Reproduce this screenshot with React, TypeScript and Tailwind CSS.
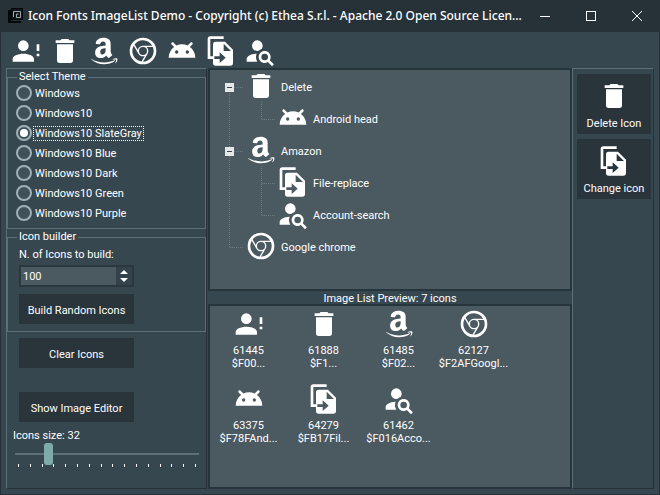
import { useState, type ReactNode } from "react";

type IconName = "accountAlert" | "trash" | "amazon" | "chrome" | "android" | "fileReplace" | "accountSearch";

const PATHS: Record<IconName, string> = {
  accountAlert:
    "M10,4A4,4 0 0,1 14,8A4,4 0 0,1 10,12A4,4 0 0,1 6,8A4,4 0 0,1 10,4M10,14C14.42,14 18,15.79 18,18V20H2V18C2,15.79 5.58,14 10,14M20,12V7H22V12H20M20,16V14H22V16H20Z",
  trash:
    "M19,4H15.5L14.5,3H9.5L8.5,4H5V6H19M6,19A2,2 0 0,0 8,21H16A2,2 0 0,0 18,19V7H6V19Z",
  amazon:
    "M15.93,17.09C15.75,17.25 15.5,17.26 15.3,17.15C14.41,16.41 14.25,16.07 13.76,15.36C12.29,16.86 11.25,17.31 9.34,17.31C7.09,17.31 5.33,15.92 5.33,13.14C5.33,10.96 6.5,9.5 8.19,8.76C9.65,8.12 11.68,8 13.23,7.83V7.5C13.23,6.84 13.28,6.09 12.9,5.54C12.58,5.05 11.95,4.84 11.4,4.84C10.38,4.84 9.47,5.37 9.25,6.45C9.2,6.69 9,6.93 8.78,6.94L6.18,6.66C5.96,6.61 5.72,6.44 5.78,6.1C6.38,2.95 9.23,2 11.78,2C13.08,2 14.78,2.35 15.81,3.33C17.11,4.55 17,6.18 17,7.95V12.12C17,13.37 17.5,13.93 18,14.6C18.17,14.85 18.21,15.14 18,15.31L15.94,17.09H15.93M13.23,10.56V10C11.29,10 9.24,10.39 9.24,12.67C9.24,13.83 9.85,14.62 10.87,14.62C11.63,14.62 12.3,14.15 12.73,13.4C13.25,12.47 13.23,11.6 13.23,10.56M20.16,19.54C18,21.14 14.82,22 12.1,22C8.29,22 4.85,20.59 2.25,18.24C2.05,18.06 2.23,17.81 2.47,17.95C5.28,19.58 8.75,20.56 12.33,20.56C14.74,20.56 17.4,20.06 19.84,19.03C20.21,18.87 20.5,19.27 20.16,19.54M21.07,18.5C20.79,18.14 19.22,18.33 18.5,18.42C18.31,18.44 18.28,18.26 18.47,18.12C19.71,17.24 21.76,17.5 22,17.79C22.24,18.09 21.93,20.14 20.76,21.11C20.58,21.27 20.41,21.18 20.5,21C20.76,20.33 21.35,18.86 21.07,18.5Z",
  chrome:
    "M12,20L15.46,14H15.45C15.79,13.4 16,12.73 16,12C16,10.8 15.46,9.73 14.62,9H19.41C19.79,9.93 20,10.94 20,12A8,8 0 0,1 12,20M4,12C4,10.54 4.39,9.18 5.07,8L8.54,14H8.55C9.24,15.19 10.5,16 12,16C12.45,16 12.88,15.91 13.29,15.77L10.89,19.91C7,19.37 4,16.04 4,12M15,12A3,3 0 0,1 12,15A3,3 0 0,1 9,12A3,3 0 0,1 12,9A3,3 0 0,1 15,12M12,4C14.96,4 17.54,5.61 18.92,8H12C10.06,8 8.45,9.38 8.08,11.21L5.7,7.08C7.16,5.21 9.44,4 12,4M12,2A10,10 0 0,0 2,12A10,10 0 0,0 12,22A10,10 0 0,0 22,12A10,10 0 0,0 12,2Z",
  android:
    "M8,11.5A1.25,1.25 0 0,0 6.75,12.75A1.25,1.25 0 0,0 8,14A1.25,1.25 0 0,0 9.25,12.75A1.25,1.25 0 0,0 8,11.5M16,11.5A1.25,1.25 0 0,0 14.75,12.75A1.25,1.25 0 0,0 16,14A1.25,1.25 0 0,0 17.25,12.75A1.25,1.25 0 0,0 16,11.5M12,7C13.5,7 14.9,7.33 16.18,7.91L18.34,5.75C18.73,5.36 19.36,5.36 19.75,5.75C20.14,6.14 20.14,6.77 19.75,7.16L17.95,8.96C20.41,10.79 22,13.71 22,17H2C2,13.71 3.59,10.79 6.05,8.96L4.25,7.16C3.86,6.77 3.86,6.14 4.25,5.75C4.64,5.36 5.27,5.36 5.66,5.75L7.82,7.91C9.1,7.33 10.5,7 12,7Z",
  fileReplace:
    "M14,1H4A2,2 0 0,0 2,3V18H7V16H4V3H14V1M15,5H8A2,2 0 0,0 6,7V16H11V13L15.5,17L11,21V18H6V21A2,2 0 0,0 8,23H19A2,2 0 0,0 21,21V11L15,5M14,12V6.5L19.5,12H14Z",
  accountSearch:
    "M15.5,12C18,12 20,14 20,16.5C20,17.38 19.75,18.21 19.31,18.9L22.39,22L21,23.39L17.88,20.32C17.19,20.75 16.37,21 15.5,21C13,21 11,19 11,16.5C11,14 13,12 15.5,12M15.5,14A2.5,2.5 0 0,0 13,16.5A2.5,2.5 0 0,0 15.5,19A2.5,2.5 0 0,0 18,16.5A2.5,2.5 0 0,0 15.5,14M10,4A4,4 0 0,1 14,8C14,8.91 13.69,9.75 13.18,10.43C12.32,10.75 11.55,11.26 10.91,11.9L10,12A4,4 0 0,1 6,8A4,4 0 0,1 10,4M2,20V18C2,15.88 5.31,14.14 9.5,14C9.18,14.78 9,15.62 9,16.5C9,17.79 9.38,19 10,20H2Z",
};

function Icon({ name }: { name: IconName }) {
  return (
    <svg viewBox="0 0 24 24" className="size-8 shrink-0" fill="white" fillRule="evenodd" aria-hidden="true">
      <path d={PATHS[name]} />
    </svg>
  );
}

const TOOLBAR: { icon: IconName; label: string }[] = [
  { icon: "accountAlert", label: "Account alert" },
  { icon: "trash", label: "Delete" },
  { icon: "amazon", label: "Amazon" },
  { icon: "chrome", label: "Google chrome" },
  { icon: "android", label: "Android head" },
  { icon: "fileReplace", label: "File-replace" },
  { icon: "accountSearch", label: "Account-search" },
];

const THEMES = [
  "Windows",
  "Windows10",
  "Windows10 SlateGray",
  "Windows10 Blue",
  "Windows10 Dark",
  "Windows10 Green",
  "Windows10 Purple",
];

const PREVIEW: { icon: IconName; code: string; name: string }[] = [
  { icon: "accountAlert", code: "61445", name: "$F00..." },
  { icon: "trash", code: "61888", name: "$F1..." },
  { icon: "amazon", code: "61485", name: "$F02..." },
  { icon: "chrome", code: "62127", name: "$F2AFGoogl..." },
  { icon: "android", code: "63375", name: "$F78FAnd..." },
  { icon: "fileReplace", code: "64279", name: "$FB17Fil..." },
  { icon: "accountSearch", code: "61462", name: "$F016Acco..." },
];

const TREE: { icon: IconName; label: string; children: { icon: IconName; label: string }[] }[] = [
  { icon: "trash", label: "Delete", children: [{ icon: "android", label: "Android head" }] },
  {
    icon: "amazon",
    label: "Amazon",
    children: [
      { icon: "fileReplace", label: "File-replace" },
      { icon: "accountSearch", label: "Account-search" },
    ],
  },
  { icon: "chrome", label: "Google chrome", children: [] },
];

const TICKS = Array.from({ length: 16 }, (_, i) => i);

function TitleBar() {
  return (
    <header className="flex h-8 shrink-0 items-center bg-[#263238]">
      <svg viewBox="0 0 16 16" className="ml-2 size-4 shrink-0" aria-hidden="true">
        <path d="M0 2H3V13H13V15H0Z" fill="#05080a" />
        <rect x="3.5" y="0.5" width="11" height="11" fill="#10171b" stroke="#05080a" />
        <path d="M5.5 9V3.5H12.5V9.5H8.5V6H10.5" fill="none" stroke="#9aa6ac" />
      </svg>
      <h1 className="ml-1 min-w-0 flex-1 text-[12px] leading-4 font-medium whitespace-nowrap">
        Icon Fonts ImageList Demo - Copyright (c) Ethea S.r.l. - Apache 2.0 Open Source Licen...
      </h1>
      <div className="flex shrink-0">
        <button aria-label="Minimize" className="grid h-8 w-[46px] place-items-center">
          <svg viewBox="0 0 10 10" className="size-[10px]" stroke="white"><path d="M0 5.5H10" /></svg>
        </button>
        <button aria-label="Maximize" className="grid h-8 w-[46px] place-items-center">
          <svg viewBox="0 0 10 10" className="size-[10px]" stroke="white" fill="none"><rect x="0.5" y="0.5" width="9" height="9" /></svg>
        </button>
        <button aria-label="Close" className="grid h-8 w-[46px] place-items-center">
          <svg viewBox="0 0 10 10" className="size-[10px]" stroke="white"><path d="M0 0L10 10M10 0L0 10" /></svg>
        </button>
      </div>
    </header>
  );
}

function Group({ title, children }: { title: string; children: ReactNode }) {
  return (
    <fieldset className="border border-[#5d6f77] pb-[7px]">
      <legend className="ml-[9px] px-[2px] leading-4">{title}</legend>
      {children}
    </fieldset>
  );
}

function FlatButton({ children, onClick }: { children: ReactNode; onClick?: () => void }) {
  return (
    <button onClick={onClick} className="block h-[30px] w-[115px] bg-[#29343b] pt-0.5 text-center">
      {children}
    </button>
  );
}

function ActionButton({ icon, children }: { icon: IconName; children: ReactNode }) {
  return (
    <button className="flex h-[60px] w-full flex-col items-center bg-[#29343b] pt-[6px]">
      <Icon name={icon} />
      <span className="mt-[5px] whitespace-nowrap">{children}</span>
    </button>
  );
}

function RootBranch({ child, last }: { child?: boolean; last?: boolean }) {
  return (
    <svg viewBox="0 0 35 32" className="h-8 w-[35px] shrink-0" fill="none" aria-hidden="true">
      <g stroke="#6c7b82" strokeDasharray="1 1">
        <path d={last ? "M19.5 0V17" : "M19.5 0V32"} />
        {!child && <path d="M20 17.5H33" />}
      </g>
    </svg>
  );
}

function OpenBranch({ first }: { first: boolean }) {
  return (
    <svg viewBox="0 0 35 32" className="h-8 w-[35px] shrink-0" fill="none" aria-hidden="true">
      <g stroke="#6c7b82" strokeDasharray="1 1">
        <path d={first ? "M19.5 17V32" : "M19.5 0V32"} />
        <path d="M24 17.5H33" />
      </g>
      <rect x="15" y="13" width="9" height="9" fill="#e4e8ea" />
      <path d="M17 17.5H22" stroke="#37474f" />
    </svg>
  );
}

function ChildBranch({ last }: { last: boolean }) {
  return (
    <svg viewBox="0 0 32 32" className="size-8 shrink-0" fill="none" aria-hidden="true">
      <g stroke="#6c7b82" strokeDasharray="1 1">
        <path d={last ? "M16.5 0V17" : "M16.5 0V32"} />
        <path d="M17 17.5H31" />
      </g>
    </svg>
  );
}

function Tree() {
  return (
    <ul>
      {TREE.map((node, i) => (
        <li key={node.label}>
          <div className="flex h-8 items-center">
            {node.children.length > 0 ? <OpenBranch first={i === 0} /> : <RootBranch last />}
            <Icon name={node.icon} />
            <span className="ml-1 pt-0.5">{node.label}</span>
          </div>
          {node.children.length > 0 && (
            <ul>
              {node.children.map((c, j) => (
                <li key={c.label} className="flex h-8 items-center">
                  <RootBranch child />
                  <ChildBranch last={j === node.children.length - 1} />
                  <Icon name={c.icon} />
                  <span className="ml-1 pt-0.5">{c.label}</span>
                </li>
              ))}
            </ul>
          )}
        </li>
      ))}
    </ul>
  );
}

export default function App() {
  const [theme, setTheme] = useState("Windows10 SlateGray");
  const [count, setCount] = useState(100);
  const [size, setSize] = useState(32);

  return (
    <div className="flex min-h-screen flex-col bg-[#37474f] font-['Noto_Sans',sans-serif] text-white">
      <TitleBar />
      <main className="flex flex-1 flex-col border-x border-b border-[#263238] px-[5px] pb-[5px] font-['Roboto',sans-serif] text-[11px] leading-[13px]">
        <nav aria-label="Icons" className="flex h-9 items-center gap-[7px] pt-px pl-1">
          {TOOLBAR.map((t) => (
            <button key={t.icon} aria-label={t.label}>
              <Icon name={t.icon} />
            </button>
          ))}
        </nav>
        <div className="flex flex-1">
          <aside className="w-[201px] shrink-0 border border-t-[#5d6f77] border-r-[#263238] border-b-[#263238] border-l-[#5d6f77]">
            <Group title="Select Theme">
              <div className="-my-0.5 flex flex-col">
                {THEMES.map((t) => (
                  <label key={t} className="ml-2 flex h-5 items-center gap-px">
                    <input
                      type="radio"
                      name="theme"
                      checked={theme === t}
                      onChange={() => setTheme(t)}
                      className="grid size-4 appearance-none place-items-center rounded-full border-2 border-[#9fb0b7] bg-[#40515a] checked:before:size-2 checked:before:rounded-full checked:before:bg-white"
                    />
                    <span className={theme === t ? "border border-dotted border-white px-px" : "border border-transparent px-px"}>
                      {t}
                    </span>
                  </label>
                ))}
              </div>
            </Group>
            <Group title="Icon builder">
              <div className="ml-[11px] flex flex-col">
                <label htmlFor="count" className="pt-[3px]">N. of Icons to build:</label>
                <div className="mt-1 mb-[7px] flex h-[22px] w-[115px] border-2 border-[#2a373e] bg-[#4b5960]">
                  <input
                    id="count"
                    type="number"
                    value={count}
                    onChange={(e) => setCount(Number(e.target.value))}
                    className="min-w-0 flex-1 [appearance:textfield] px-0.5 outline-none [&::-webkit-inner-spin-button]:appearance-none"
                  />
                  <div className="flex w-4 flex-col bg-[#34434b] py-px">
                    <button aria-label="Increase" onClick={() => setCount(count + 1)} className="grid flex-1 place-items-center">
                      <svg viewBox="0 0 8 4" className="h-1 w-2" fill="white"><path d="M4 0L8 4H0Z" /></svg>
                    </button>
                    <button aria-label="Decrease" onClick={() => setCount(count - 1)} className="grid flex-1 place-items-center">
                      <svg viewBox="0 0 8 4" className="h-1 w-2" fill="white"><path d="M0 0H8L4 4Z" /></svg>
                    </button>
                  </div>
                </div>
                <FlatButton>Build Random Icons</FlatButton>
              </div>
            </Group>
            <div className="mt-[6px] ml-3 flex flex-col gap-6">
              <FlatButton>Clear Icons</FlatButton>
              <FlatButton>Show Image Editor</FlatButton>
            </div>
            <div className="mt-[7px] mr-[7px] ml-2">
              <label htmlFor="size" className="-ml-0.5 block">Icons size: {size}</label>
              <input
                id="size"
                type="range"
                min={16}
                max={112}
                step={8}
                value={size}
                onChange={(e) => setSize(Number(e.target.value))}
                className="mt-px block h-[22px] w-full appearance-none bg-transparent [&::-webkit-slider-runnable-track]:h-0.5 [&::-webkit-slider-runnable-track]:bg-[#5d6f77] [&::-webkit-slider-thumb]:-mt-2.5 [&::-webkit-slider-thumb]:h-[22px] [&::-webkit-slider-thumb]:w-[9px] [&::-webkit-slider-thumb]:appearance-none [&::-webkit-slider-thumb]:rounded-[3px] [&::-webkit-slider-thumb]:bg-[#80abab]"
              />
              <div className="-mt-px flex justify-between px-[3px]" aria-hidden="true">
                {TICKS.map((i) => (
                  <span key={i} className="h-[3px] w-px bg-white" />
                ))}
              </div>
            </div>
          </aside>
          <section className="ml-px flex min-w-0 flex-1 flex-col">
            <div className="h-[223px] border-2 border-[#26353c] bg-[#4b5960]">
              <Tree />
            </div>
            <h2 className="pt-0.5 text-center leading-[11px]">Image List Preview: 7 icons</h2>
            <ul className="grid flex-1 grid-cols-[repeat(auto-fill,75px)] content-start border-2 border-[#26353c] bg-[#4b5960] pt-0.5 pl-px">
              {PREVIEW.map((p) => (
                <li key={p.code} className="flex h-[75px] flex-col items-center">
                  <Icon name={p.icon} />
                  <span className="mt-1">{p.code}</span>
                  <span>{p.name}</span>
                </li>
              ))}
            </ul>
          </section>
          <aside className="flex w-[82px] shrink-0 flex-col gap-[5px] border border-t-[#5d6f77] border-r-[#263238] border-b-[#263238] border-l-[#5d6f77] pt-[5px] pr-0.5 pl-1">
            <ActionButton icon="trash">Delete Icon</ActionButton>
            <ActionButton icon="fileReplace">Change icon</ActionButton>
          </aside>
        </div>
      </main>
    </div>
  );
}
